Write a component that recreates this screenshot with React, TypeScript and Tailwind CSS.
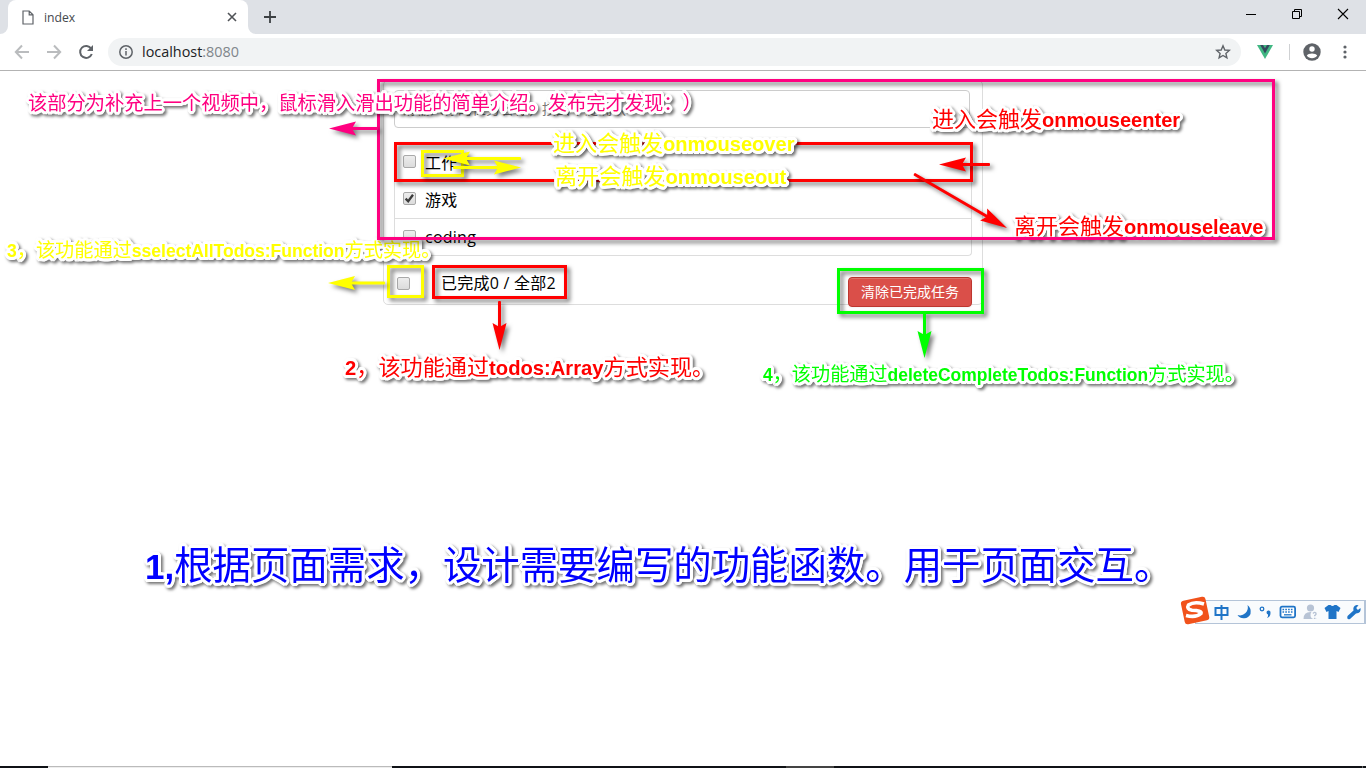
import React from "react";

const UI = "font-['Open_Sans','Noto_Sans_CJK_SC',sans-serif]";

function Note({ className, parts }: { className: string; parts: [string, string?][] }) {
  return (
    <div
      className={`absolute whitespace-nowrap leading-none font-['Liberation_Sans','Noto_Sans_CJK_SC',sans-serif] [text-spacing-trim:space-all] [text-shadow:3px_0_#fff,2.8px_1.2px_#fff,2.1px_2.1px_#fff,1.2px_2.8px_#fff,0_3px_#fff,-1.2px_2.8px_#fff,-2.1px_2.1px_#fff,-2.8px_1.2px_#fff,-3px_0_#fff,-2.8px_-1.2px_#fff,-2.1px_-2.1px_#fff,-1.2px_-2.8px_#fff,0_-3px_#fff,1.2px_-2.8px_#fff,2.1px_-2.1px_#fff,2.8px_-1.2px_#fff,1.5px_0_#fff,-1.5px_0_#fff,0_1.5px_#fff,0_-1.5px_#fff] [filter:drop-shadow(2px_2px_1.5px_rgba(0,0,0,0.55))] ${className}`}
    >
      {parts.map(([cjk, latin], i) => (
        <React.Fragment key={i}>
          {cjk}
          {latin && <span className="font-bold text-[0.912em]">{latin}</span>}
        </React.Fragment>
      ))}
    </div>
  );
}

function Arrow({ from, to, color }: { from: [number, number]; to: [number, number]; color: string }) {
  const dx = to[0] - from[0];
  const dy = to[1] - from[1];
  const len = Math.hypot(dx, dy);
  const angle = (Math.atan2(dy, dx) * 180) / Math.PI;
  return (
    <g transform={`translate(${from[0]} ${from[1]}) rotate(${angle})`} fill={color}>
      <rect x="0" y="-1.5" width={len - 20} height="3" rx="1" />
      <path d={`M${len} 0L${len - 27} -7L${len - 23} 0L${len - 27} 7Z`} />
    </g>
  );
}

function Box({ className }: { className: string }) {
  return <div className={`absolute border-3 [filter:drop-shadow(3px_3px_2px_rgba(0,0,0,0.55))] ${className}`} />;
}

function Check({ checked = false }: { checked?: boolean }) {
  return (
    <span className="flex size-[13px] shrink-0 items-center justify-center rounded-[2px] border border-[#a9a9a9] bg-linear-to-b from-[#ededed] to-[#dcdcdc]">
      {checked && (
        <svg width="11" height="11" viewBox="0 0 11 11" fill="none" stroke="#3c3c3c" strokeWidth="2.3">
          <path d="M1.6 5.6L4.2 8.2L9 1.8" />
        </svg>
      )}
    </span>
  );
}

function Browser() {
  return (
    <header className={UI}>
      <div className="flex h-[34px] bg-[#dee1e6] pl-2">
        <div className="relative flex w-60 items-center rounded-t-lg bg-white pr-[11px] pl-[14px]">
          <svg width="12" height="15" viewBox="0 0 12 15" fill="none" stroke="#5f6368" strokeWidth="1.2">
            <path d="M1 1H7.2L11 4.8V14H1ZM7.2 1V4.8H11" />
          </svg>
          <span className="mt-[2px] ml-[10px] text-[12.2px] leading-4 text-[#45494d]">index</span>
          <svg className="ml-auto" width="10" height="10" viewBox="0 0 10 10" stroke="#505357" strokeWidth="1.6">
            <path d="M1 1L9 9M9 1L1 9" />
          </svg>
          <svg className="absolute -left-2 bottom-0" width="8" height="8" fill="#fff">
            <path d="M8 0V8H0A8 8 0 0 0 8 0Z" />
          </svg>
          <svg className="absolute -right-2 bottom-0" width="8" height="8" fill="#fff">
            <path d="M0 0V8H8A8 8 0 0 1 0 0Z" />
          </svg>
        </div>
        <svg className="mt-[11px] ml-4" width="12" height="12" stroke="#3c4043" strokeWidth="1.8">
          <path d="M6 0V12M0 6H12" />
        </svg>
        <div className="mt-2 mr-[17px] ml-auto flex gap-[34px]">
          <svg width="12" height="12" stroke="#000">
            <path d="M1 6.5H11" />
          </svg>
          <svg width="12" height="12" stroke="#000" fill="none">
            <path d="M1.5 3.5H8.5V10.5H1.5ZM3.5 3V1.5H10.5V8.5H9" />
          </svg>
          <svg width="12" height="12" stroke="#000" strokeWidth="1.1">
            <path d="M1 1L11 11M11 1L1 11" />
          </svg>
        </div>
      </div>
      <div className="flex h-[37px] items-center border-b border-[#b3b3b3] pl-[14px]">
        <svg className="shrink-0" width="16" height="16" fill="none" stroke="#babcbe" strokeWidth="2">
          <path d="M15 8H2.5M8 1.5L1.8 8L8 14.5" />
        </svg>
        <svg className="ml-4 shrink-0" width="16" height="16" fill="none" stroke="#babcbe" strokeWidth="2">
          <path d="M1 8H13.5M8 1.5L14.2 8L8 14.5" />
        </svg>
        <svg className="ml-4 shrink-0" width="16" height="16" fill="none" stroke="#5f6368" strokeWidth="2">
          <path d="M13.2 4.6A6 6 0 1 0 13.8 10" />
          <path d="M15 1V7H9Z" fill="#5f6368" stroke="none" />
        </svg>
        <div className="ml-[14px] flex h-7 w-[1133px] shrink-0 items-center rounded-full bg-[#f1f3f4] pr-[10px] pl-[11px]">
          <svg width="14" height="14" fill="none" stroke="#5f6368" strokeWidth="1.5">
            <circle cx="7" cy="7" r="6.2" />
            <path d="M7 6V10.5M7 3.3V5" />
          </svg>
          <span className="-mt-px ml-[9px] text-[14.4px] leading-5 text-[#202124]">
            localhost<span className="text-[#80868b]">:8080</span>
          </span>
          <svg className="ml-auto" width="16" height="16" viewBox="0 0 16 16" fill="none" stroke="#5f6368" strokeWidth="1.4">
            <path d="M8 1.8L9.8 6L14.3 6.4L10.9 9.4L11.9 13.9L8 11.5L4.1 13.9L5.1 9.4L1.7 6.4L6.2 6Z" />
          </svg>
        </div>
        <svg className="ml-4 shrink-0" width="16" height="14">
          <path d="M0 0H16L8 14Z" fill="#41b883" />
          <path d="M3.2 0H6L8 3.3L10 0H12.8L8 8.4Z" fill="#35495e" />
        </svg>
        <div className="ml-4 h-4 w-px bg-[#cfd1d3]" />
        <svg className="ml-[13px] shrink-0" width="18" height="18">
          <circle cx="9" cy="9" r="8.7" fill="#5f6368" />
          <circle cx="9" cy="6" r="2.7" fill="#fff" />
          <path d="M3.8 12.5C5 9.8 13 9.8 14.2 12.5C12 16 6 16 3.8 12.5Z" fill="#fff" />
        </svg>
        <svg className="ml-[22px] shrink-0" width="4" height="14" fill="#5f6368">
          <circle cx="2" cy="2" r="1.6" />
          <circle cx="2" cy="7" r="1.6" />
          <circle cx="2" cy="12" r="1.6" />
        </svg>
      </div>
    </header>
  );
}

function TodoPanel() {
  const items = [
    { name: "工作", done: false },
    { name: "游戏", done: true },
    { name: "coding", done: false },
  ];
  return (
    <section className={`ml-[383px] mt-[9px] h-[225px] w-[600px] rounded-[5px] border border-[#ddd] px-[10px] pt-[9px] text-base text-black ${UI}`}>
      <div className="flex h-[38px] w-[576px] items-center rounded border border-[#ccc] px-[7px] text-sm text-[#777]">
        请输入你的任务名称，按回车键确认
      </div>
      <ul className="mt-[17px] h-[111px] w-[578px] rounded-b border border-t-0 border-[#ddd]">
        {items.map((t) => (
          <li key={t.name} className="flex h-[37px] items-center border-b border-[#ddd] pb-[3px] pl-2 last:border-b-0">
            <Check checked={t.done} />
            <span className="mt-0.5 ml-[9px] leading-6 tracking-[0.25px]">{t.name}</span>
          </li>
        ))}
      </ul>
      <div className="mt-[21px] flex">
        <div className="flex h-3 items-center pl-[3px]">
          <Check />
          <span className="ml-[31px] leading-6 tracking-[0.25px]">已完成0 / 全部2</span>
        </div>
        <button className="mr-0 ml-auto flex h-[30px] w-[124px] shrink-0 items-center justify-center rounded border border-[#bd362f] bg-[#da4f49] text-sm text-white shadow-[inset_0_1px_0_rgba(255,255,255,0.2),0_1px_2px_rgba(0,0,0,0.05)]">
          清除已完成任务
        </button>
      </div>
    </section>
  );
}

function ImeBar() {
  return (
    <div className="absolute top-[597px] left-[1180px] h-7 w-[186px]">
      <div className="mt-[3px] ml-[15px] flex h-6 items-center border border-r-2 border-[#b4c4d8] bg-[#f9fbfd] pl-[17px]">
        <svg className="w-[153px] shrink-0" height="20" viewBox="0 0 152 20" fill="#1f74c7">
          <path d="M2 6H14V13H2Z M8 3V18" fill="none" stroke="#1f74c7" strokeWidth="2" />
          <path d="M34 3A8 8 0 0 1 24 13A7.5 7.5 0 0 0 37 12Q38 6 34 3Z" />
          <circle cx="48.5" cy="7" r="1.8" fill="none" stroke="#1f74c7" strokeWidth="1.3" />
          <path d="M53 10A2 2 0 1 1 57 11Q57 15 53.5 16Q55 14 54.5 12.5Q53 12 53 10Z" />
          <rect x="67" y="4.7" width="14.6" height="10.6" rx="1.5" fill="#fff" stroke="#1f74c7" strokeWidth="1.8" />
          <path d="M69 7.5H80M69 10H80" stroke="#1f74c7" strokeWidth="1.4" strokeDasharray="1.6 1.2" />
          <path d="M70.5 12.8H78" stroke="#1f74c7" strokeWidth="1.3" />
          <g fill="#b7c3d5">
            <circle cx="97" cy="6" r="3.6" />
            <path d="M90 17Q90 10 97 10Q103 10 103 17Z" />
            <circle cx="101" cy="13" r="4" fill="#f9fbfd" />
          </g>
          <path d="M99.5 11.5Q101 9.5 102.5 11.2Q103 12.5 101.2 13.6V14.2M101.2 15.8V17" fill="none" stroke="#b7c3d5" strokeWidth="1.4" />
          <path d="M115 3H117Q119 5 121 3H123L127 6L125 10L123 9V17H115V9L113 10L111 6Z" />
          <path d="M134 14L140 8.5Q139 4 143 3L145 3.2L142.7 6L144.4 8L147 6Q148 11 142.5 11.5L136.5 17Q133 18 134 14Z" />
        </svg>
      </div>
      <svg className="absolute -top-[3px] left-0" width="30" height="32" viewBox="0 0 30 32">
        <rect x="2.5" y="4.5" width="25" height="24" rx="3" fill="#f1521b" transform="rotate(-12 15 16)" />
        <path d="M24 10Q14 7 8.5 11Q6 15 12 16.3Q22 16.5 21 19.5Q16 24 6 21.5" fill="none" stroke="#fff" strokeWidth="3.6" />
      </svg>
    </div>
  );
}

export default function App() {
  return (
    <main className="relative flex h-[768px] w-[1366px] flex-col overflow-hidden bg-white">
      <Browser />
      <TodoPanel />
      <div className="mt-auto flex h-[2px] bg-[#101216]">
        <div className="ml-12 w-[344px] border-t border-[#bbb] bg-[#eee]" />
        <div className="ml-[394px] w-12 bg-[#444]" />
        <div className="ml-auto w-1 border-l border-[#666]" />
      </div>

      <Note className="top-[241px] left-[7px] text-[19.2px] text-[#ff0]" parts={[["", "3"], ["，该功能通过", "sselectAllTodos:Function"], ["方式实现。"]]} />
      <Note className="top-[216px] left-[1014px] text-[22px] text-[#f00]" parts={[["离开会触发", "onmouseleave"]]} />
      <Box className="top-[79px] left-[377px] h-[161px] w-[898px] border-[#ff0080]" />
      <Box className="top-[142px] left-[394px] h-[40px] w-[579px] border-[#f00]" />
      <Box className="top-[150px] left-[421px] h-[27px] w-[43px] border-[#ff0]" />
      <Box className="top-[265px] left-[387px] h-[33px] w-[37px] border-[#ff0]" />
      <Box className="top-[265px] left-[432px] h-[34px] w-[135px] border-[#f00]" />
      <Box className="top-[268px] left-[837px] h-[46px] w-[147px] border-[#0f0]" />
      <Note className="top-[94px] left-[28px] text-[19.25px] text-[#ff0080]" parts={[["该部分为补充上一个视频中，鼠标滑入滑出功能的简单介绍。发布完才发现：）"]]} />
      <Note className="top-[109px] left-[932px] text-[22px] text-[#f00]" parts={[["进入会触发", "onmouseenter"]]} />
      <Note className="top-[133px] left-[553px] text-[22px] text-[#ff0]" parts={[["进入会触发", "onmouseover"]]} />
      <Note className="top-[166px] left-[555px] text-[22.1px] text-[#ff0]" parts={[["离开会触发", "onmouseout"]]} />
      <Note className="top-[357px] left-[345px] text-[22.15px] text-[#f00]" parts={[["", "2"], ["，该功能通过", "todos:Array"], ["方式实现。"]]} />
      <Note className="top-[365px] left-[763px] text-[19.15px] text-[#0f0]" parts={[["", "4"], ["，该功能通过", "deleteCompleteTodos:Function"], ["方式实现。"]]} />
      <Note className="top-[547px] left-[145px] text-[38.4px] text-[#00f]" parts={[["", "1,"], ["根据页面需求，设计需要编写的功能函数。用于页面交互。"]]} />
      <svg className="pointer-events-none absolute top-0 left-0 [filter:drop-shadow(3px_3px_2px_rgba(0,0,0,0.5))]" width="1366" height="768">
        <Arrow from={[378, 128.5]} to={[329, 128.5]} color="#ff0080" />
        <Arrow from={[990, 164.5]} to={[939, 164.5]} color="#f00" />
        <Arrow from={[914, 174]} to={[1007, 228]} color="#f00" />
        <Arrow from={[521, 158.5]} to={[443, 158.5]} color="#ff0" />
        <Arrow from={[453, 167.5]} to={[521, 167.5]} color="#ff0" />
        <Arrow from={[385, 283]} to={[328, 283]} color="#ff0" />
        <Arrow from={[499.5, 301]} to={[499.5, 350]} color="#f00" />
        <Arrow from={[924.5, 313]} to={[924.5, 358]} color="#0f0" />
      </svg>
      <ImeBar />
    </main>
  );
}
